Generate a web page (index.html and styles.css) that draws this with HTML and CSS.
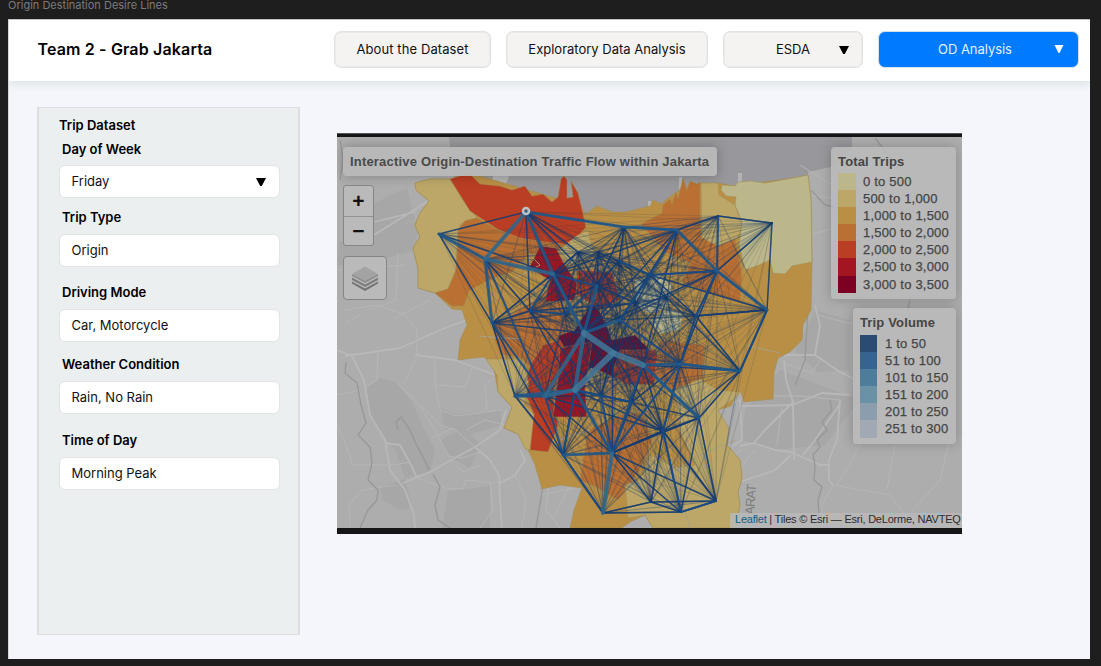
FILE: index.html
```html
<!DOCTYPE html>
<html lang="en">
<head>
<meta charset="utf-8">
<title>Origin Destination Desire Lines</title>
<link rel="stylesheet" href="styles.css">
</head>
<body>
<div class="frame-name">Origin Destination Desire Lines</div>
<div class="frame">
  <header class="topbar">
    <h1 class="brand">Team 2 - Grab Jakarta</h1>
    <nav class="nav">
      <a class="tab tab-about">About the Dataset</a>
      <a class="tab tab-eda">Exploratory Data Analysis</a>
      <a class="tab tab-esda">ESDA<svg class="caret" viewBox="0 0 10 8"><path d="M0 0H10L5.8 8H4.2Z"/></svg></a>
      <a class="tab tab-od">OD Analysis<svg class="caret" viewBox="0 0 10 8"><path d="M0.5 0H9.5L5.5 8H4.5Z"/></svg></a>
    </nav>
  </header>
  <main class="content">
    <aside class="panel">
      <h2 class="panel-title">Trip Dataset</h2>
      <div class="field field-day"><div class="label">Day of Week</div><div class="select">Friday<svg class="caret" viewBox="0 0 10 8"><path d="M0 0H10L5.8 8H4.2Z"/></svg></div></div>
      <div class="field field-type"><div class="label">Trip Type</div><div class="select">Origin</div></div>
      <div class="field field-mode"><div class="label">Driving Mode</div><div class="select">Car, Motorcycle</div></div>
      <div class="field field-weather"><div class="label">Weather Condition</div><div class="select">Rain, No Rain</div></div>
      <div class="field field-time"><div class="label">Time of Day</div><div class="select">Morning Peak</div></div>
    </aside>
    <section class="map">
      <svg class="canvas" viewBox="337 137 625 391">
        <rect x="337" y="137" width="625" height="391" fill="#adadad"/>
        <g fill="#a7a7a7">
          <path d="M374 203L407 188L415 220L374 235Z"/>
          <path d="M339 242L374 232L420 220L415 250L372 262L337 265Z"/>
          <path d="M366 388L380 378L396 382L412 402L422 425L435 450L430 472L405 478L395 450L378 430L368 410Z"/>
          <path d="M441 408L455 414L487 412L500 409L502 425L470 434L445 429Z"/>
          <path d="M440 440L465 428L480 445L470 468L448 456Z"/>
          <path d="M380 487L405 479L412 508L400 510L383 500Z"/>
          <path d="M448 491L490 486L490 528L442 528Z"/>
          <path d="M815 310L850 320L850 370L818 372L795 350Z"/>
          <path d="M780 370L860 400L825 445L775 450L742 440L745 410Z"/>
        </g>
        <path d="M449 137H852V147L835 166L808 172L809 240H586L440 182L454 178Z" fill="#98979b"/>
        <path d="M491 184L500 150L517 157L506 184ZM738 173h4v10h-4ZM648 201h4v6l-4-1ZM679 177h3v12h-3Z" fill="#b3b3b4"/>
        <g class="roads">
          <path d="M337 350L352 356L364 380L370 415L385 440L390 470L405 490L414 515L415 528"/>
          <path d="M345 356L400 348L440 330L480 315"/>
          <path d="M374 235L430 200M374 222L415 212M403 483L430 472L451 460L475 447L500 430L506 410"/>
          <path d="M385 443L400 445L411 465L417 478"/>
          <path d="M475 447L490 460L499 475L500 500L502 528M500 483L515 475L525 460L520 450"/>
          <path d="M415 355L455 360L495 375"/>
        </g>
        <g class="roads minor">
          <path d="M344 310L378 305L405 315L417 330L417 355M417 478L445 488L463 489L466 480L495 483M378 350L377 380L364 388M396 382L415 400L432 425L451 460L463 472L480 465"/>
          <path d="M435 385L440 410L457 416L500 410M435 385L465 387L472 368M435 385V362"/>
          <path d="M432 438L453 428L467 440L481 452M466 430L485 420L505 425M337 425L350 455L352 465L393 465L410 462"/>
          <path d="M337 395L360 390M430 300L395 318M455 430L440 425L420 405M487 410L485 385L495 378M490 483L493 510L480 528M398 253L396 300L370 310M337 270L405 265M350 528L349 505L362 490L395 485M448 456L462 458L481 452M515 475L526 500L522 528M345 323L360 315M415 360L405 382M800 165L840 190L860 200M837 200L875 207L900 210"/>
        </g>
        <g class="roads">
          <path d="M815 305L820 325L815 355L840 372L860 382L870 395L885 405"/>
          <path d="M783 355L815 355M784 360L786 380L793 402L794 460M740 406L792 405L822 393L850 395"/>
          <path d="M740 446L754 443L775 450L791 452L820 465L829 465M793 402L765 430L754 443"/>
          <path d="M791 455L775 470L740 482M840 400L837 440L829 460L829 480L833 485"/>
          <path d="M803 455L815 440L840 404M724 405L740 400L742 440L729 448"/>
        </g>
        <g class="roads minor">
          <path d="M885 405L962 440M742 396L800 396L840 400M833 485L890 495L905 515L912 528M755 450L743 465M833 485L822 505L820 528M812 195L850 201L880 218M810 235L845 225M818 315L860 326M784 363L812 373L820 360M782 405L777 445M862 440L850 465L836 485M895 445L887 490M950 437L940 480L911 512M549 484L546 510L560 528M570 485L555 515M725 460L742 450M865 350L850 390M540 495L575 488"/>
        </g>
        <g fill="none" stroke="#979797" stroke-width="1.3">
          <path d="M346 362L345 373L357 383L361 405L366 423L358 435L370 447L372 463L368 480L378 490L377 500L368 510L360 528"/>
          <path d="M398 430L396 422L401 417L410 430L416 444L422 455L429 470M433 474L440 487L435 505L438 520L450 528M340 140L343 160L340 180M543 485L539 510L536 528"/>
          <path d="M830 400L832 410L822 422L827 430L817 440L820 447L813 455L815 465L814 480L822 487L818 500L820 528M811 190L825 205L840 208M875 138L900 170L935 185M910 300L907 312L913 325L905 340M808 310L805 360L795 385"/>
        </g>
        <g stroke-width=".8" stroke="#9f8e55" stroke-opacity=".7">
          <path class="c3" d="M415 183L430 179L450 179L469 173L580 205L586 214L597 206L612 212L626 212L650 206L653 200L662 204L668 198L680 190L701 183H718L735 186L793 178L808 175L811 200L812 262L811 310L803 325L802 340L790 352L778 358L774 372L773 399L744 402L741 392L735 398L731 406L718 410L722 420L729 428L727 445L740 460L742 478L738 492L740 505L735 528H653L645 515L630 522L622 528H570L574 510L582 488L560 485L542 489L535 465L528 450L518 434L504 428L512 407L498 392L493 362L483 357L458 360L460 340L467 325L462 310L452 309L435 293L418 288V268L413 248L420 237L415 225L420 213L429 201L416 190Z"/>
          <path class="c2" d="M415 183L430 179L450 179L463 200L477 218L467 220L460 225L458 248L456 270L448 289L435 293L418 288V268L413 248L420 237L415 225L420 213L429 201L416 190Z"/>
          <path class="c4" d="M477 218L500 231L540 241L576 245L555 257L530 254L512 272L494 278L483 283L469 291L464 306L452 306L435 293L448 289L456 270L458 230L465 221Z"/>
          <path class="c4" d="M494 325L528 305L555 285L572 330L585 365L528 365L521 358L500 354L495 340Z"/>
          <path class="c5" d="M450 179L469 173L480 184L500 186L512 190L525 186L532 196L543 194L552 202L558 197L561 179L564 176L567 180L567 198L573 197L571 181L578 193L581 205L586 227L570 245L545 242L520 238L497 229L470 211Z"/>
          <path class="c2" d="M558 251L575 237L588 230L594 255L568 265Z"/>
          <path class="c4" d="M641 224L662 213L663 205L670 199L672 204L676 192L678 199L683 178L687 190L690 181L697 184L700 182V218L702 238L735 239L742 276L740 302L706 292L682 282L690 263L665 252Z"/>
          <path class="c2" d="M701 183H718L719 195L735 205L742 225L738 238L718 246L702 238Z"/>
          <path class="c1" d="M721 190L722 185L735 186L738 182L750 181L765 183L793 178L808 175L811 200L812 262L792 266L785 274L773 273L770 260L759 265L745 270L739 245L742 222L735 205L736 197L726 196Z"/>
          <path class="c1" d="M635 280L658 274L672 285L668 308L648 314L636 304Z"/>
          <path class="c1" d="M650 320L668 308L683 314L680 330L660 334Z"/>
          <path class="c6" d="M540 246L556 248L563 262L578 285L574 300L545 302L550 280L529 268Z"/>
          <path class="c5" d="M578 270L612 272L620 300L600 310L576 294Z"/>
          <path class="c7" d="M592 302L602 315L612 340L635 335L648 348L640 365L620 380L598 370L578 365L555 350L560 335L575 330Z"/>
          <path class="c5" d="M530 365L543 345L560 340L570 358L552 392L558 425L548 452L530 450L526 430L533 412L524 390Z"/>
          <path class="c6" d="M560 348L592 342L585 388L587 417H553L558 378Z"/>
          <path class="c5" d="M620 350L655 350L662 366L653 385L625 384L612 374Z"/>
          <path class="c4" d="M660 340L705 345L702 380L672 390L655 373Z"/>
          <path class="c2" d="M486 359L522 359L529 384L524 405L534 414L530 450L525 449L518 434L504 428L512 407L498 392L497 375Z"/>
          <path class="c4" d="M588 430L620 415L642 412L652 440L640 470L618 500L596 487L580 480Z"/>
          <path class="c2" d="M675 390L700 379L718 390L741 392L735 398L718 410L729 428L727 445L740 460L742 478L738 492L740 505L735 528H653L645 515L628 518L625 485L640 480L651 455L675 468L695 465L680 430Z"/>
        </g>
        <path d="M516 278L540 265L525 250M478 336L520 339M670 460L690 528M628 485L665 478L700 455L735 440M655 455L680 470M745 345L780 353M560 440L590 430" fill="none" stroke="#aaa083"/>
        <g id="flows"></g>
        <circle cx="526" cy="211" r="3" fill="none" stroke="#bac2c9" stroke-width="2.5"/>
        <text class="region-name" transform="translate(754 515) rotate(-86)">ARAT</text>
      </svg>
      <div class="map-title">Interactive Origin-Destination Traffic Flow within Jakarta</div>
      <div class="zoomer"><span>+</span><span>−</span></div>
      <div class="layers"><svg viewBox="0 0 28 28"><path d="M1 17L14 24L27 17V19L14 26.5L1 19Z" fill="#747474"/><path d="M1 13L14 20L27 13V15.5L14 22.5L1 15.5Z" fill="#7d7d7d"/><path d="M1 9.5L14 16L27 9.5V11.5L14 18.5L1 11.5Z" fill="#8d8d8d"/><path d="M14 2L27 9.5L14 16.5L1 9.5Z" fill="#a3a3a3"/></svg></div>
      <div class="legend trips">
        <b>Total Trips</b>
        <ul><li><i class="s1"></i>0 to 500</li><li><i class="s2"></i>500 to 1,000</li><li><i class="s3"></i>1,000 to 1,500</li><li><i class="s4"></i>1,500 to 2,000</li><li><i class="s5"></i>2,000 to 2,500</li><li><i class="s6"></i>2,500 to 3,000</li><li><i class="s7"></i>3,000 to 3,500</li></ul>
      </div>
      <div class="legend volume">
        <b>Trip Volume</b>
        <ul><li><i class="v1"></i>1 to 50</li><li><i class="v2"></i>51 to 100</li><li><i class="v3"></i>101 to 150</li><li><i class="v4"></i>151 to 200</li><li><i class="v5"></i>201 to 250</li><li><i class="v6"></i>251 to 300</li></ul>
      </div>
      <div class="credit"><a>Leaflet</a> | Tiles © Esri — Esri, DeLorme, NAVTEQ</div>
    </section>
  </main>
</div>
<script src="flows.js"></script>
</body>
</html>
```

FILE: styles.css
```css
* { box-sizing: border-box; }
body { margin: 0; width: 1101px; height: 666px; overflow: hidden; background: #1e1e1e; font-family: Inter, "Liberation Sans", sans-serif; font-size: 13px; color: #111; }
.frame-name { height: 19px; padding-left: 8px; font-size: 11px; line-height: 11px; color: #7b7b7b; }
.frame { width: 1082px; height: 640px; margin-left: 8px; background: #f4f6fb; border-top: 1px solid #c5c5c5; border-left: 1px solid #d5d6d8; display: flex; flex-direction: column; overflow: hidden; }
.topbar { height: 61px; flex: none; background: #fff; display: flex; justify-content: space-between; padding: 11px 11px 0 29px; box-shadow: 0 4px 8px #dde5e5; }
.brand { margin: 0 0 0 -.5px; font-size: 16px; line-height: 37px; font-weight: 600; color: #000; white-space: nowrap; letter-spacing: .15px; }
.nav { display: flex; gap: 15px; }
.tab { height: 37px; line-height: 34px; display: block; text-align: center; background: #f4f3f1; border: 1px solid #e3e2e1; border-radius: 7px; box-shadow: inset 0 0 0 .5px #e3e2e1; position: relative; }
.tab-about { width: 157px; letter-spacing: .1px; }
.tab-eda { width: 202px; }
.tab-esda { width: 140px; }
.tab-od { width: 201px; background: #007aff; color: #e3f0ff; border-color: #d6e0eb; box-shadow: none; padding-right: 7px; letter-spacing: -.05px; }
.caret { width: 10px; height: 8px; fill: #000; position: absolute; right: 13px; top: 14px; }
.tab-od .caret { fill: #fff; right: 14px; top: 13px; }
.content { flex: 1; display: flex; align-items: flex-start; padding: 26px 0 0 28px; }
.panel { width: 263px; height: 528px; background: #ebeff0; border: 2px solid #dcdfdf; border-width: 1.5px 2px; padding: 9px 18px 0 20px; }
.panel-title { margin: 0; font-size: 13px; line-height: 16px; font-weight: 600; color: #000; }
.field { margin-top: 16px; }
.field-day { margin-top: 8px; }
.field-type { margin-top: 11px; }
.field-mode { margin-top: 18px; }
.field-time { margin-top: 19px; }
.field-weather { margin-top: 15px; }
.label { padding-left: 3px; font-weight: 600; line-height: 16px; color: #000; }
.select { height: 33px; width: 221px; margin-top: 8px; border: 1px solid #e2e3e3; border-radius: 6px; background: #fff; padding-left: 11.5px; line-height: 30px; position: relative; }
.field-day .select { line-height: 31px; }
.field:not(.field-day) .select { margin-top: 9px; margin-bottom: -1px; }
.select .caret { top: 12px; }
.map { position: relative; width: 625px; height: 401px; margin: 26px 0 0 37px; background: #161616; border-top: 1px solid #555; padding-top: 3px; overflow: hidden; font-family: "Liberation Sans", Arial, sans-serif; }
.canvas { display: block; width: 625px; height: 391px; }
.roads { fill: none; stroke: #b8b8b8; stroke-width: 1.8; stroke-linejoin: round; }
.minor { stroke-width: 1; stroke: #b6b6b6; }
.c1 { fill: #bcb78a; } .c2 { fill: #bca768; } .c3 { fill: #b98f45; } .c4 { fill: #ba7032; }
.c5 { fill: #ba3e23; } .c6 { fill: #a31520; } .c7 { fill: #7c0928; }
.region-name { font: 13px "Liberation Sans", sans-serif; fill: #7d7d7d; letter-spacing: -1px; }
.map-title { position: absolute; left: 6px; top: 13px; width: 374px; height: 29px; background: rgba(184,184,184,.95); border-radius: 4px; box-shadow: 0 0 12px rgba(0,0,0,.25); padding-left: 7px; line-height: 29px; font-weight: 700; font-size: 13px; color: #4a4a4a; white-space: nowrap; letter-spacing: .19px; }
.zoomer { position: absolute; left: 6px; top: 51px; width: 31px; height: 61px; background: #bababa; border: 1px solid #858585; border-radius: 3px; font-weight: 700; font-size: 21px; color: #111; }
.zoomer span { display: block; height: 30px; line-height: 29px; text-align: center; }
.zoomer span + span { border-top: 1px solid #929292; line-height: 27px; }
.layers { position: absolute; left: 6px; top: 122px; width: 44px; height: 44px; background: #bababa; border: 1px solid #858585; border-radius: 4px; padding: 7px; }
.layers svg { width: 28px; height: 29px; display: block; }
.legend { position: absolute; background: rgba(186,186,186,.92); border-radius: 4px; box-shadow: 0 0 12px rgba(0,0,0,.22); font-size: 13px; color: #454545; padding: 6px 8px; letter-spacing: .2px; -webkit-text-stroke: .25px #454545; }
.legend b { display: block; line-height: 17px; white-space: nowrap; -webkit-text-stroke: 0; letter-spacing: .15px; }
.legend ul { margin: 3px 0 0; padding: 0; list-style: none; }
.legend li { display: flex; height: 17.1px; line-height: 17px; white-space: nowrap; }
.legend i { width: 18px; margin-right: 7px; flex: none; }
.trips { left: 494px; top: 13px; width: 125px; height: 152px; padding-left: 7px; }
.volume { left: 516px; top: 174px; width: 103px; height: 136px; padding-left: 7px; }
.volume ul { margin-top: 4px; }
.volume i { margin-right: 8px; width: 17px; }
.s1 { background: #bcb78a; } .s2 { background: #bca768; } .s3 { background: #b98f45; } .s4 { background: #ba7032; }
.s5 { background: #ba3e23; } .s6 { background: #a31520; } .s7 { background: #7c0022; }
.v1 { background: #2b4b73; } .v2 { background: #376390; } .v3 { background: #4e7d9c; } .v4 { background: #6b91a6; } .v5 { background: #8c9dad; } .v6 { background: #a1aab4; }
.credit { position: absolute; left: 393px; top: 379px; width: 232px; height: 15px; background: rgba(184,184,184,.85); padding-left: 5px; font-size: 11px; line-height: 13px; white-space: nowrap; color: #2d2d2d; letter-spacing: -.22px; }
.credit a { color: #0b6288; }
```

FILE: flows.js
```js
// District centroids in map coordinates.
const nodes = {
  A: [439, 234], B: [485, 259], C: [492, 323], D: [526, 212], E: [553, 274], F: [515, 396],
  G: [545, 396], H: [563, 455], I: [603, 513], J: [575, 390], K: [612, 453], L: [651, 502],
  M: [681, 512], N: [716, 501], O: [663, 431], P: [699, 418], Q: [740, 371], R: [767, 310],
  S: [772, 223], T: [718, 216], U: [677, 230], V: [624, 227], W: [717, 271], X: [696, 316],
  Y: [650, 275], Z: [597, 286], a: [584, 333], b: [643, 365], c: [680, 364], d: [632, 402],
  e: [619, 261], f: [601, 396], g: [530, 311], h: [667, 298], i: [620, 320], k: [578, 252],
  l: [598, 252], m: [565, 314], n: [636, 303], p: [613, 353]
};
const layer = document.getElementById("flows");
function draw(from, to, width, color, opacity) {
  const line = document.createElementNS("http://www.w3.org/2000/svg", "line");
  line.setAttribute("x1", nodes[from][0]);
  line.setAttribute("y1", nodes[from][1]);
  line.setAttribute("x2", nodes[to][0]);
  line.setAttribute("y2", nodes[to][1]);
  line.setAttribute("stroke", color);
  line.setAttribute("stroke-width", width);
  line.setAttribute("stroke-opacity", opacity);
  line.setAttribute("stroke-linecap", "round");
  layer.appendChild(line);
}
// Light background flows: every pair, fading with distance.
const keys = Object.keys(nodes);
keys.forEach((p, x) => keys.slice(x + 1).forEach(q => {
  const d = Math.hypot(nodes[p][0] - nodes[q][0], nodes[p][1] - nodes[q][1]);
  if (d < 85) draw(p, q, 1.4, "#0f3468", 0.55);
  else if (d < 150) draw(p, q, 1.1, "#16386a", 0.33);
  else if (d < 290) draw(p, q, 0.8, "#28384f", 0.2);
}));
// Stronger flows grouped by volume.
const tiers = [
  [1.5, "#123c74", "AD AC AE CE CF Bg Cg DZ Dg DV Dk TS SR SW TU UE VZ RW RX RY RQ QP QX Qb QO PO PN PM Oc OM ON OK Ob OL LI LM LN MN MI NK MK NO KP KO KL HI HC FH FG JK JH JO GO GK dK db dO dc dJ YW YX Yi Ya Xc XR WX eZ eV kE lZ ng gJ gf mE nZ bU pO pK pf aC aW iU hQ Wc Ua"],
  [2.2, "#184c84", "BG CG UY WX RQ Xc cQ cO Kc Kb Kf GH HJ HI MN OM Kd Jd fJ Ea EZ eY ic iY gE gm Zm bP VU WY TW"],
  [3.2, "#20598a", "AB BC UW WR bc cQ GF HK Za aE JK ia bP DE DV VU FJ"],
  [4, "#30698f", "BE DB KI GJ aG aJ"],
  [6, "#44799a", "Jp ap pb"]
];
tiers.forEach(([width, color, pairs]) => pairs.split(" ").forEach(([p, q]) => draw(p, q, width, color, 0.82)));
```
